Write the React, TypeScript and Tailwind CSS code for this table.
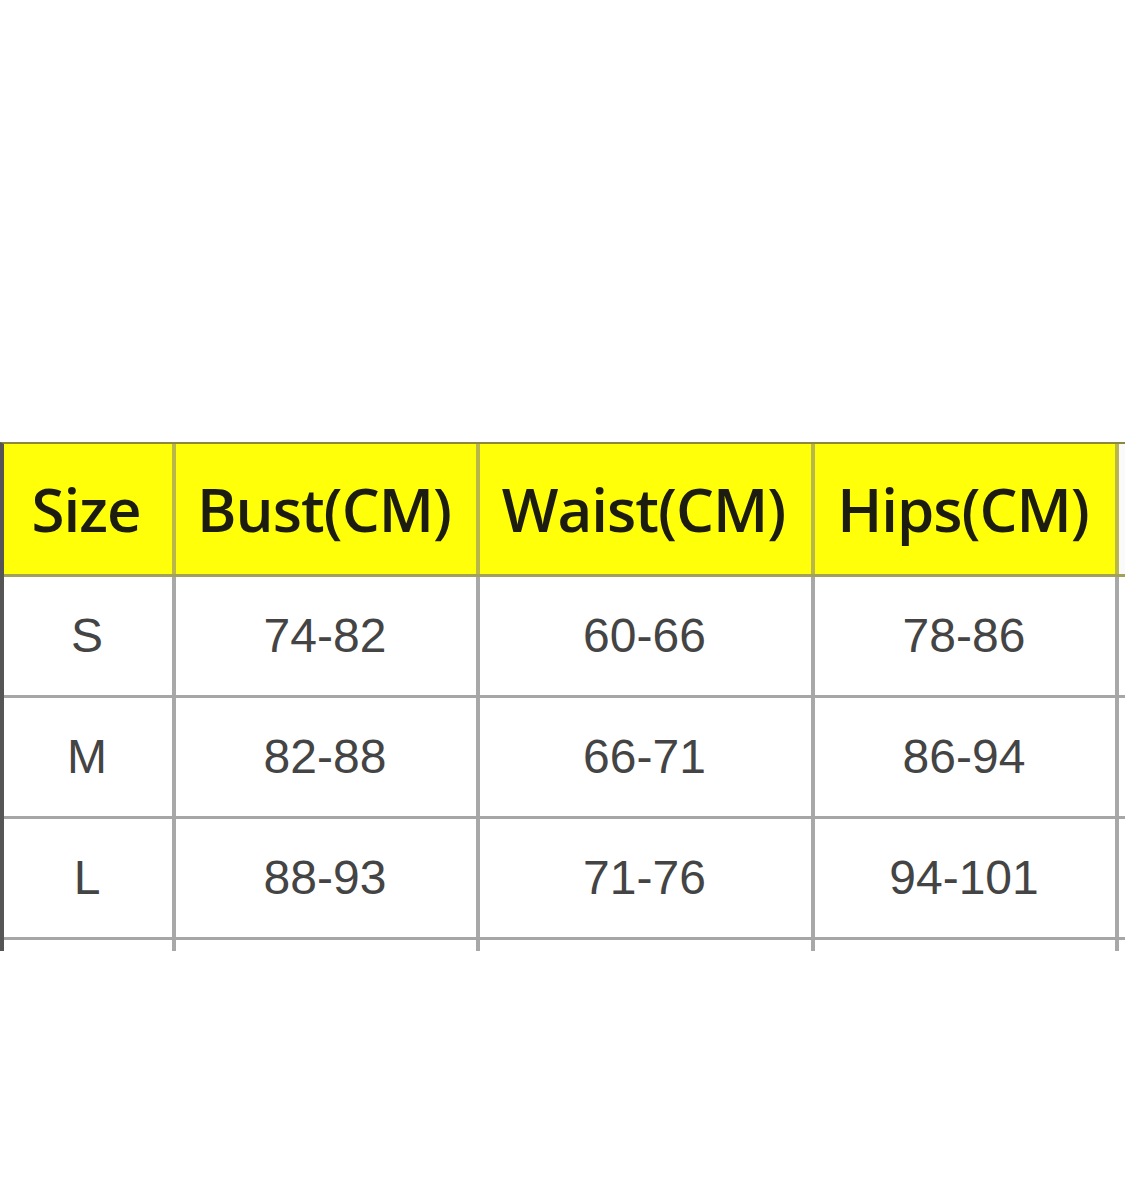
const headers = ["Size", "Bust(CM)", "Waist(CM)", "Hips(CM)"];

const rows = [
  ["S", "74-82", "60-66", "78-86"],
  ["M", "82-88", "66-71", "86-94"],
  ["L", "88-93", "71-76", "94-101"],
];

// column widths incl. right divider
const cols = ["w-[172px]", "w-[304px]", "w-[335px]", "w-[304px]"];

export default function App() {
  return (
    <div className="h-[1183px] w-[1125px] bg-white overflow-hidden">
      <div className="h-[442px]" />
      <div className="h-[509px] w-[1125px] overflow-hidden">
        <div className="flex w-[1200px] flex-col border-l-4 border-t-2 border-l-[#555] border-t-[#8c8a3a]">
          {/* header */}
          <div className="flex h-[133px] border-b-[3px] border-b-[#a3a05a]">
            {headers.map((h, i) => (
              <div
                key={h}
                className={`${cols[i]} flex shrink-0 items-center justify-center border-r-4 border-r-[#b9b64a] bg-[#ffff0a] pr-[4px] font-['Open_Sans',sans-serif] text-[60px] font-semibold tracking-[-1px] text-[#1c1c10]`}
              >
                {h}
              </div>
            ))}
            <div className="w-[81px] shrink-0 bg-[#fafafa]" />
          </div>

          {rows.map((r) => (
            <div key={r[0]} className="flex h-[121px] border-b-[3px] border-b-[#a6a6a6]">
              {r.map((c, i) => (
                <div
                  key={i}
                  className={`${cols[i]} flex shrink-0 items-center justify-center border-r-4 border-r-[#a8a8a8] bg-white pr-[2px] font-['Liberation_Sans',Arial,sans-serif] text-[48px] text-[#444]`}
                >
                  {c}
                </div>
              ))}
              <div className="w-[81px] shrink-0 bg-white" />
            </div>
          ))}

          {/* next row, cut off by the crop */}
          <div className="flex h-[60px]">
            {cols.map((w, i) => (
              <div key={i} className={`${w} shrink-0 border-r-4 border-r-[#a8a8a8] bg-white`} />
            ))}
          </div>
        </div>
      </div>
    </div>
  );
}
